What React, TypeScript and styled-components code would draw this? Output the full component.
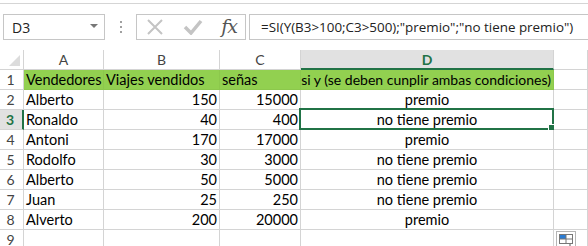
import styled, { createGlobalStyle } from 'styled-components'

const GlobalStyle = createGlobalStyle`
  html, body {
    margin: 0;
    padding: 0;
    background: #ffffff;
    overflow: hidden;
  }
  * { box-sizing: border-box; }
`

const GREEN = '#217346'
const GRID = '#d4d4d4'

const Page = styled.div`
  width: 588px;
  height: 246px;
  overflow: hidden;
  background: #fff;
  font-family: Lato, 'Liberation Sans', sans-serif;
`

const TopStrip = styled.div`
  height: 4px;
  border-bottom: 1px solid #d5d5d5;
`

const FormulaRow = styled.div`
  display: flex;
  align-items: stretch;
  height: 26px;
  margin: 10px 0 10px 3px;
`

const NameBox = styled.div`
  width: 102px;
  border: 1px solid #c6c6c6;
  display: flex;
  align-items: center;
  justify-content: space-between;
  padding: 0 6px 0 8px;
  font-family: 'Open Sans', 'Noto Sans', sans-serif;
  font-size: 14px;
  color: #222;
`

const Caret = styled.span`
  width: 0;
  height: 0;
  border-left: 4px solid transparent;
  border-right: 4px solid transparent;
  border-top: 4px solid #777;
  margin-top: -2px;
`

const Grip = styled.div`
  width: 31px;
  display: flex;
  flex-direction: column;
  align-items: center;
  justify-content: center;
  gap: 3px;
  span {
    width: 2px;
    height: 2px;
    background: #a0a0a0;
  }
`

const ButtonBox = styled.div`
  width: 110px;
  border: 1px solid #c6c6c6;
  display: flex;
  align-items: center;
  padding: 0 8px 0 9px;
  justify-content: space-between;
`

const Fx = styled.span`
  font-family: 'DejaVu Serif', 'Liberation Serif', serif;
  font-style: italic;
  font-size: 19px;
  color: #555;
  letter-spacing: -1px;
  margin-top: -2px;
`

const FormulaInput = styled.div`
  flex: 1;
  margin-left: 3px;
  border-top: 1px solid #c6c6c6;
  border-bottom: 1px solid #c6c6c6;
  border-left: 1px solid #c6c6c6;
  display: flex;
  align-items: center;
  padding-left: 11px;
  font-family: 'Open Sans', 'Noto Sans', sans-serif;
  font-size: 13.4px;
  color: #222;
  white-space: nowrap;
`

const Grid = styled.div`
  display: grid;
  grid-template-columns: 24px 80px 116px 81px 253px 1fr;
  grid-auto-rows: 20px;
`

const Corner = styled.div`
  border-right: 1px solid ${GRID};
  border-bottom: 1px solid ${GRID};
  position: relative;
  &::after {
    content: '';
    position: absolute;
    right: 3px;
    bottom: 3px;
    width: 0;
    height: 0;
    border-left: 11px solid transparent;
    border-bottom: 11px solid #dcdcdc;
  }
`

const ColHead = styled.div<{ $active?: boolean }>`
  border-right: 1px solid ${GRID};
  border-bottom: ${(p) => (p.$active ? `2px solid ${GREEN}` : `1px solid ${GRID}`)};
  background: ${(p) => (p.$active ? '#e1e1e1' : '#fff')};
  color: ${(p) => (p.$active ? GREEN : '#444')};
  font-weight: ${(p) => (p.$active ? 700 : 400)};
  font-size: 14px;
  display: flex;
  align-items: center;
  justify-content: center;
  padding-top: ${(p) => (p.$active ? '1px' : '0')};
`

const RowHead = styled.div<{ $active?: boolean }>`
  border-right: ${(p) => (p.$active ? `2px solid ${GREEN}` : `1px solid ${GRID}`)};
  border-bottom: 1px solid ${GRID};
  background: ${(p) => (p.$active ? '#e1e1e1' : '#fff')};
  color: ${(p) => (p.$active ? GREEN : '#444')};
  font-weight: ${(p) => (p.$active ? 700 : 400)};
  font-size: 14px;
  display: flex;
  align-items: flex-end;
  justify-content: center;
  padding: 0 2px 1px 0;
`

const Cell = styled.div<{ $align?: 'left' | 'right' | 'center'; $fill?: boolean; $clip?: boolean }>`
  border-right: 1px solid ${(p) => (p.$fill ? '#8cc84c' : GRID)};
  border-bottom: 1px solid ${(p) => (p.$fill ? '#8cc84c' : GRID)};
  background: ${(p) => (p.$fill ? '#92d050' : '#fff')};
  color: #000;
  font-size: ${(p) => (p.$clip ? '14px' : '14.5px')};
  display: flex;
  align-items: flex-end;
  justify-content: ${(p) => (p.$align === 'right' ? 'flex-end' : p.$align === 'center' ? 'center' : 'flex-start')};
  padding: 0 2px 0 2px;
  white-space: nowrap;
  overflow: ${(p) => (p.$clip ? 'hidden' : 'visible')};
  position: relative;
  line-height: 19px;
`

const Selected = styled.div`
  position: absolute;
  left: -2px;
  top: -2px;
  right: -1px;
  bottom: -1px;
  border: 2px solid ${GREEN};
  pointer-events: none;
  &::after {
    content: '';
    position: absolute;
    right: -4px;
    bottom: -4px;
    width: 6px;
    height: 6px;
    background: ${GREEN};
    border: 1px solid #fff;
  }
`

const PasteIcon = styled.div`
  position: absolute;
  left: 2px;
  top: 1px;
`

const rows: [string, string, string, string][] = [
  ['Alberto', '150', '15000', 'premio'],
  ['Ronaldo', '40', '400', 'no tiene premio'],
  ['Antoni', '170', '17000', 'premio'],
  ['Rodolfo', '30', '3000', 'no tiene premio'],
  ['Alberto', '50', '5000', 'no tiene premio'],
  ['Juan', '25', '250', 'no tiene premio'],
  ['Alverto', '200', '20000', 'premio'],
]

export default function App() {
  return (
    <Page>
      <GlobalStyle />
      <TopStrip />
      <FormulaRow>
        <NameBox>
          D3
          <Caret />
        </NameBox>
        <Grip>
          <span />
          <span />
          <span />
        </Grip>
        <ButtonBox>
          <svg width="18" height="16" viewBox="0 0 18 16">
            <path d="M2 1 L16 15 M16 1 L2 15" stroke="#c4c4c4" strokeWidth="2" fill="none" />
          </svg>
          <svg width="20" height="16" viewBox="0 0 20 16">
            <path d="M2 8 L8 14 L18 2" stroke="#c4c4c4" strokeWidth="3.5" fill="none" />
          </svg>
          <Fx>fx</Fx>
        </ButtonBox>
        <FormulaInput>=SI(Y(B3&gt;100;C3&gt;500);"premio";"no tiene premio")</FormulaInput>
      </FormulaRow>
      <Grid>
        <Corner />
        <ColHead>A</ColHead>
        <ColHead>B</ColHead>
        <ColHead>C</ColHead>
        <ColHead $active>D</ColHead>
        <ColHead />

        <RowHead>1</RowHead>
        <Cell $fill>Vendedores</Cell>
        <Cell $fill>Viajes vendidos</Cell>
        <Cell $fill>señas</Cell>
        <Cell $fill $clip $align="right">si y (se deben cunplir ambas condiciones)</Cell>
        <Cell />

        {rows.map((r, i) => {
          const n = i + 2
          const active = n === 3
          return [
            <RowHead key={`h${n}`} $active={active}>{n}</RowHead>,
            <Cell key={`a${n}`}>{r[0]}</Cell>,
            <Cell key={`b${n}`} $align="right">{r[1]}</Cell>,
            <Cell key={`c${n}`} $align="right">{r[2]}</Cell>,
            <Cell key={`d${n}`} $align="center">
              {r[3]}
              {active && <Selected />}
            </Cell>,
            <Cell key={`e${n}`} />,
          ]
        })}

        <RowHead>9</RowHead>
        <Cell />
        <Cell />
        <Cell />
        <Cell />
        <Cell>
          <PasteIcon>
            <svg width="20" height="18" viewBox="0 0 20 18">
              <rect x="0.5" y="0.5" width="19" height="19" fill="#fff" stroke="#b5b5b5" />
              <rect x="3.5" y="3.5" width="13" height="9" fill="#fff" stroke="#777" />
              <rect x="4" y="4" width="6" height="4" fill="#2b7cd3" />
              <path d="M10 3.5 V12.5 M3.5 8 H16.5" stroke="#777" />
              <path d="M14 13 V18 M11.5 15.5 H16.5" stroke="#555" />
            </svg>
          </PasteIcon>
        </Cell>
      </Grid>
    </Page>
  )
}
